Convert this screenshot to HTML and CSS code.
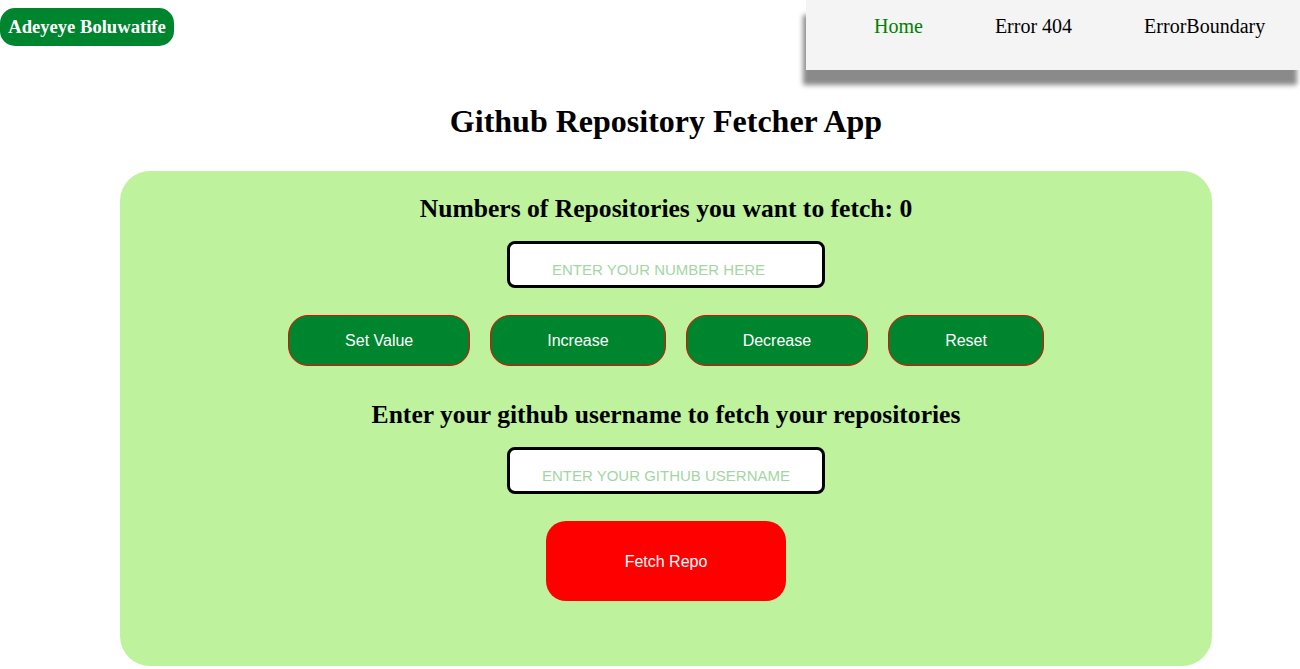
FILE: index.html
```html
<!DOCTYPE html>
<html>
<head>
<meta charset="utf-8">
<link rel="stylesheet" href="styles.css">
</head>
<body>
<header class="topbar">
  <div class="logo">Adeyeye Boluwatife</div>
  <nav class="nav">
    <a class="nav-link active">Home</a>
    <a class="nav-link">Error 404</a>
    <a class="nav-link">ErrorBoundary</a>
  </nav>
</header>
<h1 class="title">Github Repository Fetcher App</h1>
<main class="panel">
  <h2 class="heading">Numbers of Repositories you want to fetch: 0</h2>
  <input class="field number" type="number" placeholder="ENTER YOUR NUMBER HERE">
  <div class="buttons">
    <button class="btn">Set Value</button>
    <button class="btn">Increase</button>
    <button class="btn">Decrease</button>
    <button class="btn">Reset</button>
  </div>
  <h2 class="heading second">Enter your github username to fetch your repositories</h2>
  <input class="field" type="text" placeholder="ENTER YOUR GITHUB USERNAME">
  <button class="fetch">Fetch Repo</button>
</main>
</body>
</html>
```
FILE: styles.css
```css
html, body {
  margin: 0;
  padding: 0;
  background: #ffffff;
  font-family: "Liberation Serif", "Times New Roman", serif;
  overflow: hidden;
}
.topbar {
  display: flex;
  justify-content: space-between;
  align-items: flex-start;
  height: 70px;
}
.logo {
  margin-top: 8px;
  height: 38px;
  width: 174px;
  box-sizing: border-box;
  background: #00852f;
  color: #ffffff;
  border-radius: 15px;
  font-weight: bold;
  font-size: 18.6px;
  white-space: nowrap;
  display: flex;
  align-items: center;
  justify-content: center;
}
.nav {
  width: 494px;
  flex-shrink: 0;
  height: 70px;
  box-sizing: border-box;
  background: #f4f4f4;
  box-shadow: -3px 15px 5px #8a8a8a;
  display: flex;
  align-items: flex-start;
  padding-left: 32px;
  padding-top: 15px;
}
.nav-link {
  font-size: 20px;
  color: #000000;
  padding: 0 36px;
  line-height: 23px;
  white-space: nowrap;
  flex-shrink: 0;
}
.nav-link.active {
  color: #008000;
}
.title {
  margin: 33px 0 31px;
  padding-left: 32px;
  text-align: center;
  font-size: 32px;
  line-height: 37px;
  font-weight: bold;
}
.panel {
  margin: 0 88px 0 120px;
  background: #bef29c;
  border-radius: 30px;
  display: flex;
  flex-direction: column;
  align-items: center;
  padding: 24px 0 65px;
}
.heading {
  margin: 0;
  font-size: 25.6px;
  line-height: 28px;
  font-weight: bold;
  white-space: nowrap;
}
.heading.second {
  margin-top: 35px;
}
.field {
  margin-top: 18px;
  width: 318px;
  height: 47px;
  box-sizing: border-box;
  border: 3px solid #000000;
  border-radius: 8px;
  background: #ffffff;
  text-align: center;
  padding: 10px 0 0;
  font-family: "Liberation Sans", Arial, sans-serif;
  font-size: 15px;
  outline: none;
}
.field::placeholder {
  color: #a3d6a3;
}
.buttons {
  margin-top: 27px;
  display: flex;
  gap: 20px;
}
.btn {
  height: 51px;
  padding: 0 56px;
  background: #00852f;
  color: #ffffff;
  border: 1px solid #ff0000;
  border-radius: 20px;
  font-family: "Liberation Sans", Arial, sans-serif;
  font-size: 16px;
}
.fetch {
  margin-top: 27px;
  width: 240px;
  height: 80px;
  padding-top: 3px;
  background: #ff0000;
  color: #ffffff;
  border: none;
  border-radius: 20px;
  font-family: "Liberation Sans", Arial, sans-serif;
  font-size: 16px;
}
```
